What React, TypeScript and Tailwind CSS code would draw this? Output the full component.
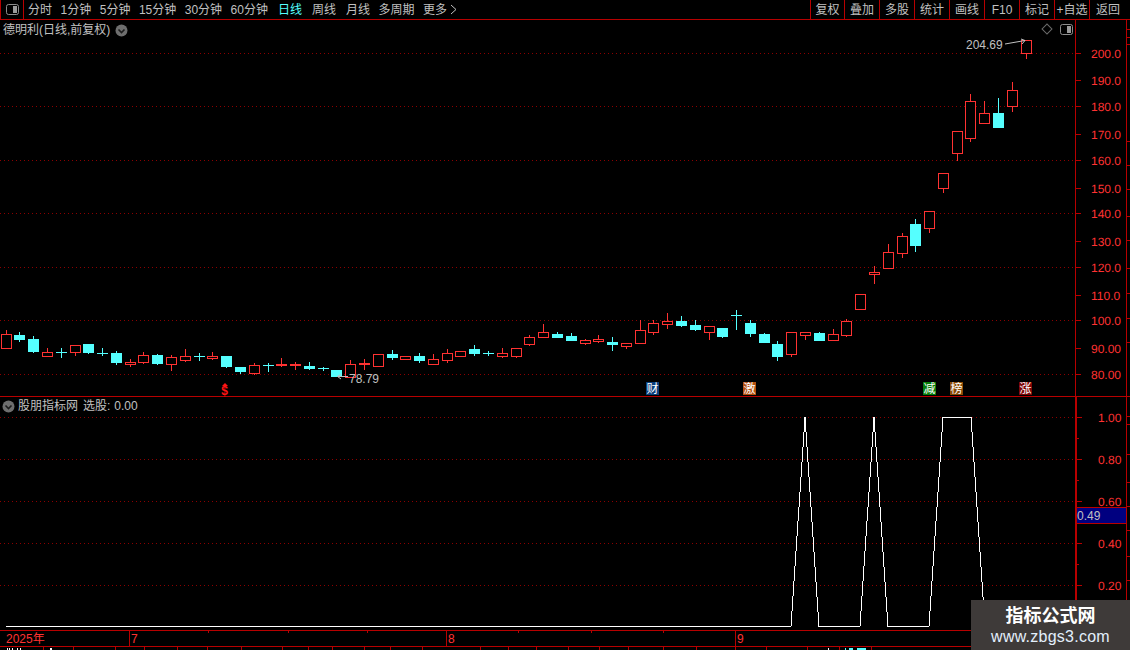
import React from "react";

const RED = "#ff3232";
const CYAN = "#55ffff";
const LINE = "#b80000";
const GRID = "#8c0000";

const periods = ["分时", "1分钟", "5分钟", "15分钟", "30分钟", "60分钟"];
const tools = ["复权", "叠加", "多股", "统计", "画线", "F10", "标记", "+自选"];

// x, body top, body bottom, wick top, wick bottom, r = hollow red / c = solid cyan
type Candle = [number, number, number, number, number, "r" | "c"];
const candles: Candle[] = [
  [6, 334, 348, 330, 348, "r"], [19, 335, 339, 332, 341, "c"], [33, 339, 351, 336, 352, "c"],
  [47, 352, 356, 348, 356, "r"], [61, 352, 352, 348, 357, "c"], [75, 345, 352, 345, 355, "r"],
  [88, 344, 352, 344, 353, "c"], [102, 353, 353, 348, 355, "c"], [116, 353, 362, 351, 364, "c"],
  [130, 362, 364, 359, 366, "r"], [143, 355, 362, 352, 363, "r"], [157, 355, 363, 354, 364, "c"],
  [171, 357, 364, 355, 370, "r"], [185, 356, 360, 349, 361, "r"], [199, 356, 356, 353, 360, "c"],
  [212, 356, 358, 352, 359, "r"], [226, 356, 366, 356, 367, "c"], [240, 367, 371, 367, 373, "c"],
  [254, 365, 373, 363, 374, "r"], [268, 365, 365, 363, 371, "c"], [281, 364, 365, 358, 366, "r"],
  [295, 364, 365, 362, 369, "r"], [309, 366, 368, 362, 369, "c"], [323, 368, 368, 367, 370, "c"],
  [336, 370, 376, 370, 376, "c"], [350, 364, 377, 360, 377, "r"], [364, 363, 364, 359, 369, "r"],
  [378, 354, 366, 354, 366, "r"], [392, 354, 357, 350, 359, "c"], [405, 356, 359, 356, 359, "r"],
  [419, 356, 360, 353, 362, "c"], [433, 359, 364, 354, 364, "r"], [447, 353, 360, 349, 362, "r"],
  [460, 351, 356, 351, 356, "r"], [474, 349, 353, 345, 355, "c"], [488, 353, 353, 351, 355, "c"],
  [502, 353, 356, 348, 357, "r"], [516, 348, 356, 348, 357, "r"], [529, 337, 344, 335, 345, "r"],
  [543, 332, 337, 324, 337, "r"], [557, 334, 337, 332, 337, "c"], [571, 336, 340, 333, 340, "c"],
  [585, 340, 343, 339, 344, "r"], [598, 339, 341, 335, 342, "r"], [612, 342, 344, 337, 350, "c"],
  [626, 343, 346, 343, 348, "r"], [640, 330, 343, 320, 343, "r"], [653, 323, 332, 320, 334, "r"],
  [667, 321, 324, 313, 328, "r"], [681, 321, 325, 316, 326, "c"], [695, 325, 329, 320, 330, "c"],
  [709, 326, 332, 326, 339, "r"], [722, 328, 336, 328, 337, "c"], [736, 315, 315, 310, 329, "c"],
  [750, 323, 333, 320, 336, "c"], [764, 334, 342, 333, 342, "c"], [777, 344, 356, 341, 360, "c"],
  [791, 332, 354, 332, 356, "r"], [805, 332, 335, 332, 339, "r"], [819, 333, 340, 332, 340, "c"],
  [833, 334, 340, 329, 340, "r"], [846, 321, 335, 319, 336, "r"], [860, 294, 309, 294, 309, "r"],
  [874, 272, 274, 266, 283, "r"], [888, 252, 268, 244, 268, "r"], [902, 236, 253, 233, 257, "r"],
  [915, 224, 245, 219, 251, "c"], [929, 211, 228, 211, 232, "r"], [943, 173, 188, 173, 192, "r"],
  [957, 131, 153, 131, 160, "r"], [970, 101, 138, 94, 141, "r"], [984, 113, 123, 101, 123, "r"],
  [998, 113, 127, 98, 127, "c"], [1012, 90, 106, 82, 111, "r"], [1026, 40, 53, 40, 58, "r"],
];

const priceLabels: [number, string][] = [
  [53, "200.0"], [80, "190.0"], [106, "180.0"], [134, "170.0"], [160, "160.0"], [188, "150.0"],
  [213, "140.0"], [241, "130.0"], [267, "120.0"], [295, "110.0"], [320, "100.0"], [348, "90.00"], [374, "80.00"],
];
const indicatorLabels: [number, string][] = [[417, "1.00"], [459, "0.80"], [501, "0.60"], [543, "0.40"], [585, "0.20"]];

const timeCells: { x: number; label?: string }[] = [
  { x: 0, label: "2025年" }, { x: 129, label: "7" }, { x: 208 }, { x: 288 }, { x: 367 }, { x: 446, label: "8" },
  { x: 518 }, { x: 591 }, { x: 663 }, { x: 735, label: "9" },
];

const tabEdges = [
  0, 43, 73, 115, 144, 177, 207, 241, 282, 308, 332, 364, 390, 422, 480, 508, 536, 568, 599, 628, 663, 696, 735, 766, 807, 839, 871,
];

// tops of the tab labels that the window cuts off: x, width, colour
const tabBits: [number, number, string][] = [
  [7, 1, "bg-white"], [9, 1, "bg-white"], [12, 1, "bg-white"], [17, 1, "bg-white"], [20, 1, "bg-white"], [50, 2, "bg-white"],
  [828, 1, "bg-white"], [845, 1, "bg-[#55ffff]"], [849, 4, "bg-[#55ffff]"], [857, 9, "bg-[#55ffff]"],
];

const markers = [
  { x: 646, label: "财", bg: "bg-[#0b3f7c]" },
  { x: 743, label: "激", bg: "bg-[#b4500f]" },
  { x: 923, label: "减", bg: "bg-[#067d0a]" },
  { x: 950, label: "榜", bg: "bg-[#8a4a05]" },
  { x: 1019, label: "涨", bg: "bg-[#7d0606]" },
];

const PanelIcon = () => (
  <svg width="13" height="11" viewBox="0 0 13 11">
    <rect x="0.5" y="0.5" width="12" height="10" rx="2" fill="#000" stroke="#8c8c8c" />
    <rect x="7" y="2" width="4" height="7" fill="#9a9a9a" />
  </svg>
);

const ChevronBadge = () => (
  <svg width="13" height="13" viewBox="0 0 13 13">
    <circle cx="6.5" cy="6.5" r="6" fill="#6e6e6e" />
    <path d="M3.5 5.5 L6.5 8.5 L9.5 5.5" fill="none" stroke="#1c1c1c" strokeWidth="1.6" />
  </svg>
);

const CandleMark = ({ c }: { c: Candle }) => {
  const [x, top, bottom, wickTop, wickBottom, kind] = c;
  const color = kind === "r" ? RED : CYAN;
  return (
    <g>
      <rect x={x} y={wickTop} width="1" height={wickBottom - wickTop + 1} fill={color} />
      {kind === "c" ? (
        <rect x={x - 5} y={top} width="11" height={bottom - top + 1} fill={color} />
      ) : (
        <rect x={x - 4.5} y={top + 0.5} width="10" height={bottom - top} fill="#000" stroke={color} />
      )}
    </g>
  );
};

const GridLines = ({ rows }: { rows: number[] }) => (
  <g shapeRendering="auto">
    {rows.map((y) => (
      <line key={y} x1="0" x2="1075" y1={y + 0.5} y2={y + 0.5} stroke={GRID} strokeDasharray="1 3" />
    ))}
  </g>
);

const AxisScale = ({ rows, viewBox, h, minor }: { rows: [number, string][]; viewBox: string; h: number; minor: number[] }) => (
  <svg width="50" height={h} viewBox={viewBox} className="block" shapeRendering="crispEdges">
    {rows.map(([y, label]) => (
      <g key={label}>
        <rect x="1076" y={y} width="5" height="1" fill={LINE} />
        <text x={label.length > 4 ? 1091 : 1097} y={y + 5} fontSize="12" fill={RED} textRendering="geometricPrecision">
          {label}
        </text>
      </g>
    ))}
    {minor.map((y) => (
      <rect key={y} x="1076" y={y} width="2" height="1" fill={LINE} />
    ))}
  </svg>
);

const SideTicks = ({ rows }: { rows: number[] }) => (
  <div className="flex h-full w-[4px] flex-col border-l border-[#b80000]">
    {rows.map((h, i) => (
      <div key={i} className="w-[3px] border-b border-[#b80000]" style={{ height: h }} />
    ))}
  </div>
);

export default function App() {
  return (
    <div className="relative flex h-[650px] w-[1130px] flex-col overflow-hidden bg-black font-['Liberation_Sans','Noto_Sans_CJK_SC',sans-serif] text-[12px] text-[#c0c0c0]">
      {/* toolbar */}
      <div className="flex h-[20px] items-center border-b border-[#b80000]">
        <div className="flex h-full w-[24px] items-center justify-center border-x border-[#b80000] pb-[1px]">
          <PanelIcon />
        </div>
        <div className="ml-[4px] flex items-center gap-[8.5px]">
          {periods.map((p) => (
            <span key={p}>{p}</span>
          ))}
          <span className="ml-[1.5px] text-[#55ffff]">日线</span>
          <span className="ml-[1.5px]">周线</span>
          <span className="ml-[1.5px]">月线</span>
          <span>多周期</span>
          <span className="flex items-center gap-[3px]">
            更多
            <svg width="7" height="11" viewBox="0 0 7 11">
              <path d="M1 1 L6 5.5 L1 10" fill="none" stroke="#c0c0c0" />
            </svg>
          </span>
        </div>
        <div className="ml-auto flex h-full">
          {tools.map((t, i) => (
            <div
              key={t}
              className={`flex h-full items-center justify-center border-l border-[#b80000] ${i === 0 ? "w-[34px]" : "w-[35px]"}`}
            >
              {t}
            </div>
          ))}
          <div className="flex h-full w-[41px] items-center justify-center border-l border-[#b80000] pr-[4px]">返回</div>
        </div>
      </div>

      {/* price pane */}
      <div className="flex h-[377px] border-b border-[#b80000]">
        <div className="relative h-full w-[1075px]">
          <svg width="1075" height="376" viewBox="0 20 1075 376" className="block" shapeRendering="crispEdges">
            <GridLines rows={[53, 106, 160, 213, 267, 320, 374]} />
            {candles.map((c) => (
              <CandleMark key={c[0]} c={c} />
            ))}
            <g shapeRendering="auto" fill="none" stroke="#c0c0c0">
              <path d="M1005 44 L1025 40.5 M1021 39 L1025 40.5 L1022 44" />
              <path d="M348 376.5 L338 376.5 M341 374 L337.5 376.5 L341 379" />
            </g>
          </svg>

          <div className="absolute left-[3px] top-[1px] flex h-[18px] items-center gap-[5px]">
            <span>德明利(日线,前复权)</span>
            <ChevronBadge />
          </div>
          <span className="absolute left-[1047px] top-[5px] size-[8px] -translate-x-1/2 rotate-45 border border-[#6a6a6a]" />
          <div className="absolute left-[1060px] top-[4px] leading-none">
            <PanelIcon />
          </div>
          <span className="absolute left-[966px] top-[18px] leading-[14px]">204.69</span>
          <span className="absolute left-[349px] top-[352px] leading-[14px]">78.79</span>

          <div className="absolute left-[221px] top-[363px] flex w-[7px] flex-col items-center">
            <span className="h-0 w-0 border-x-[3px] border-b-[3px] border-x-transparent border-b-[#ff1414]" />
            <span className="text-[12px] font-bold leading-[10px] text-[#ff1414]">$</span>
          </div>
          {markers.map((m) => (
            <span
              key={m.label}
              className={`absolute top-[362px] flex size-[13px] items-center justify-center text-[12px] leading-none text-white ${m.bg}`}
              style={{ left: m.x }}
            >
              {m.label}
            </span>
          ))}
        </div>
        <div className="h-full w-[51px] border-l border-[#b80000]">
          <AxisScale rows={priceLabels} viewBox="1076 20 50 376" h={376} minor={[]} />
        </div>
        <SideTicks rows={[10, 8, 7, 97, 24, 24, 27, 24, 28, 25, 25, 24]} />
      </div>

      {/* indicator pane */}
      <div className="flex h-[233px]">
        <div className="relative h-full w-[1075px]">
          <svg width="1075" height="233" viewBox="0 397 1075 233" className="block" shapeRendering="crispEdges">
            <GridLines rows={indicatorLabels.map(([y]) => y)} />
            <polyline
              points="6,626.5 791,626.5 805,417 819,626.5 860,626.5 874,417 888,626.5 929,626.5 943,417 971,417 985,626.5"
              fill="none"
              stroke="#fff"
            />
          </svg>
          <div className="absolute left-[2px] top-[1px] flex h-[16px] items-center">
            <ChevronBadge />
            <span className="ml-[3px]">股朋指标网</span>
            <span className="ml-[5px]">选股:</span>
            <span className="ml-[4px]">0.00</span>
          </div>
        </div>
        <div className="relative h-full w-[51px] border-l-2 border-[#b80000]">
          <AxisScale rows={indicatorLabels} viewBox="1076 397 50 233" h={233} minor={[438, 480, 522, 564, 606]} />
          <div className="absolute left-0 right-0 top-[110px] flex h-[17px] items-center border-y border-[#b80000] bg-[#000080] leading-none">
            0.49
          </div>
        </div>
        <SideTicks rows={[20, 8, 30, 28, 24, 24, 26, 24, 24]} />
      </div>

      {/* time axis */}
      <div className="flex h-[17px] border-y border-[#b80000] text-[#ff3232]">
        {timeCells.map((c, i) => (
          <div
            key={c.x}
            className={`relative flex h-full items-center ${c.label && i > 0 ? "border-l border-[#b80000] pl-[1px]" : ""} ${i === 0 ? "pl-[6px]" : ""}`}
            style={{ width: (timeCells[i + 1]?.x ?? 1130) - c.x }}
          >
            {!c.label && <span className="absolute left-0 top-0 h-[2px] w-px bg-[#b80000]" />}
            {c.label}
          </div>
        ))}
      </div>

      {/* tab strip, cut off by the window */}
      <div className="relative flex h-[3px] overflow-hidden">
        {tabEdges.map((x, i) => (
          <div
            key={x}
            className={`h-full ${i > 0 ? "border-l border-[#b80000]" : ""}`}
            style={{ width: (tabEdges[i + 1] ?? 1130) - x }}
          />
        ))}
        {tabBits.map(([x, w, color]) => (
          <span key={x} className={`absolute bottom-0 h-[2px] ${color}`} style={{ left: x, width: w }} />
        ))}
      </div>

      {/* site watermark */}
      <div className="absolute bottom-0 right-0 flex h-[50px] w-[159px] flex-col items-center bg-[#3e3a39] pt-[6px]">
        <span className="text-[18px] font-bold leading-[21px] text-white">指标公式网</span>
        <span className="text-[16px] leading-[20px] tracking-[0.25px] text-[#e3effc]">www.zbgs3.com</span>
      </div>
    </div>
  );
}
